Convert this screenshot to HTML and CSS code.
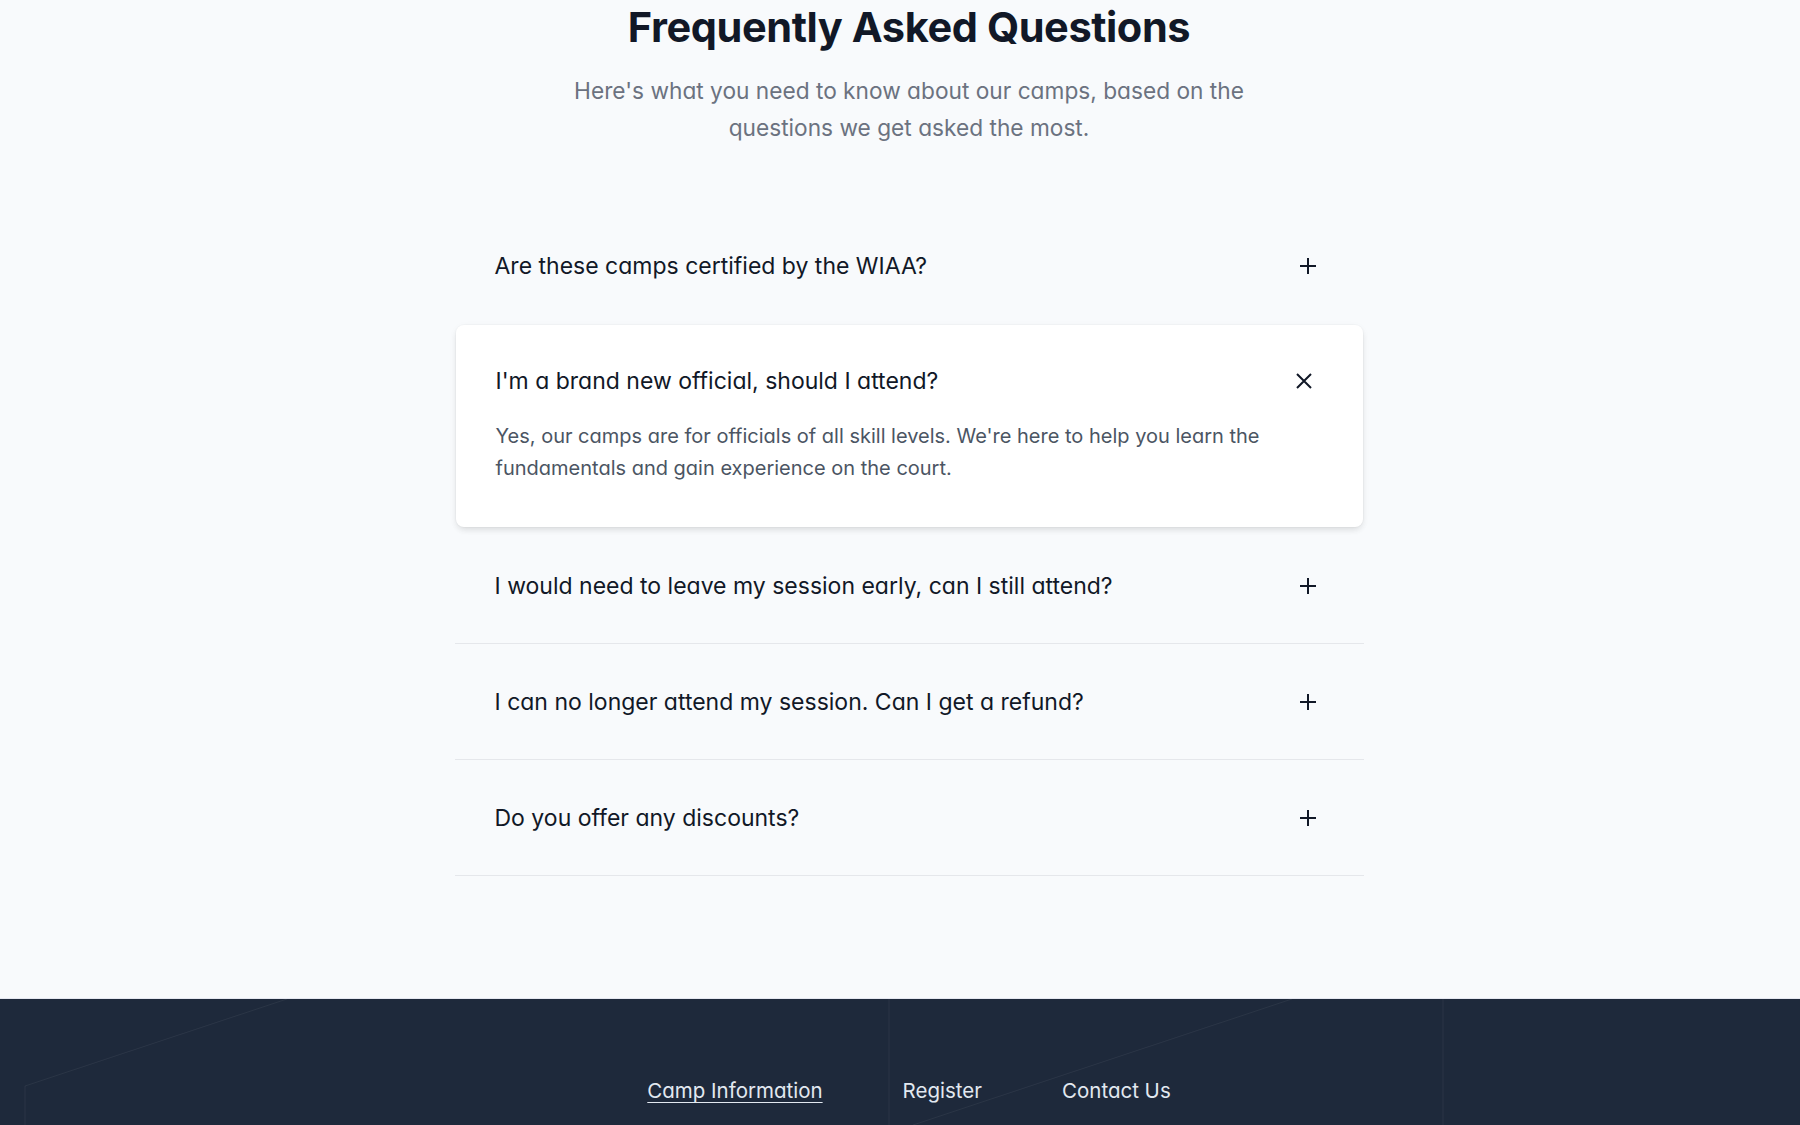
FILE: index.html
```html
<!DOCTYPE html>
<html lang="en">
<head>
<meta charset="utf-8">
<title>Frequently Asked Questions</title>
<link rel="stylesheet" href="styles.css">
</head>
<body>
<main class="page">
  <section class="faq">
    <h1 class="faq-title">Frequently Asked Questions</h1>
    <p class="faq-lead">Here's what you need to know about our camps, based on the questions we get asked the most.</p>
    <div class="faq-list">
      <div class="faq-item first">
        <span class="faq-q">Are these camps certified by the WIAA?</span>
        <svg class="icon" viewBox="0 0 16 16"><path d="M8 0v16M0 8h16"/></svg>
      </div>
      <div class="faq-card">
        <div class="faq-card-head">
          <span class="faq-q">I'm a brand new official, should I attend?</span>
          <svg class="icon icon-x" viewBox="0 0 16 16"><path d="M1 1l14 14M15 1L1 15"/></svg>
        </div>
        <p class="faq-a">Yes, our camps are for officials of all skill levels. We're here to help you learn the fundamentals and gain experience on the court.</p>
      </div>
      <div class="faq-item">
        <span class="faq-q">I would need to leave my session early, can I still attend?</span>
        <svg class="icon" viewBox="0 0 16 16"><path d="M8 0v16M0 8h16"/></svg>
      </div>
      <div class="faq-item">
        <span class="faq-q">I can no longer attend my session. Can I get a refund?</span>
        <svg class="icon" viewBox="0 0 16 16"><path d="M8 0v16M0 8h16"/></svg>
      </div>
      <div class="faq-item">
        <span class="faq-q">Do you offer any discounts?</span>
        <svg class="icon" viewBox="0 0 16 16"><path d="M8 0v16M0 8h16"/></svg>
      </div>
    </div>
  </section>
</main>
<footer class="footer">
  <svg class="footer-lines" viewBox="0 0 1800 126" preserveAspectRatio="none">
    <path d="M25 87V126M25 87L287 0M889 0V126M913 126L1292 0M1443 0V126"/>
  </svg>
  <nav class="footer-nav">
    <a class="footer-link active" href="#">Camp Information</a>
    <a class="footer-link" href="#">Register</a>
    <a class="footer-link" href="#">Contact Us</a>
  </nav>
</footer>
</body>
</html>
```

FILE: styles.css
```css
html, body {
  margin: 0;
  padding: 0;
}
body {
  background: #f8fafc;
  font-family: Inter, "Noto Sans", "Liberation Sans", sans-serif;
  font-feature-settings: "cv11" 1;
  color: #111827;
}
.page {
  padding-left: 18px;
}
.faq {
  display: flex;
  flex-direction: column;
  align-items: center;
  padding-bottom: 122px;
}
.faq-title {
  margin: 0;
  padding-top: 2px;
  font-size: 41.5px;
  line-height: 50px;
  font-weight: 700;
  letter-spacing: -0.01em;
  color: #111827;
  text-align: center;
}
.faq-lead {
  margin: 20px 0 0;
  max-width: 690px;
  font-size: 22.7px;
  line-height: 37px;
  color: #6b7280;
  text-align: center;
}
.faq-list {
  width: 909px;
  margin-top: 62px;
}
.faq-item {
  display: flex;
  align-items: center;
  justify-content: space-between;
  padding: 44px 48px 43px 40px;
  border-bottom: 1px solid #e5e7eb;
}
.faq-item.first {
  border-bottom-color: transparent;
  margin-bottom: 1px;
}
.faq-q {
  font-size: 23px;
  line-height: 28px;
  font-weight: 400;
  color: #111827;
}
.icon {
  width: 16px;
  height: 16px;
  fill: none;
  stroke: #111827;
  stroke-width: 2;
  flex: none;
}
.icon-x {
  width: 16px;
  height: 16px;
  stroke-width: 2;
  margin-right: 3px;
}
.faq-card {
  background: #ffffff;
  border-radius: 8px;
  padding: 42px 48px 43px 40px;
  margin: 0 1px 1px 1px;
  box-shadow: 0 4px 6px -1px rgba(0, 0, 0, 0.08), 0 2px 10px -2px rgba(0, 0, 0, 0.08), 0 0 0 1px rgba(0, 0, 0, 0.02);
}
.faq-card-head {
  display: flex;
  align-items: center;
  justify-content: space-between;
}
.faq-a {
  margin: 25px 0 0;
  max-width: 800px;
  font-size: 20px;
  line-height: 32px;
  color: #4b5563;
}
.footer {
  position: relative;
  background: #1e293b;
  border-top: 1px solid #e5e7f0;
  height: 126px;
  overflow: hidden;
}
.footer-lines {
  position: absolute;
  inset: 0;
  width: 100%;
  height: 100%;
  fill: none;
  stroke: rgba(255, 255, 255, 0.06);
  stroke-width: 1;
  pointer-events: none;
}
.footer-nav {
  position: relative;
  display: flex;
  justify-content: center;
  gap: 80px;
  padding: 78px 0 0 18px;
}
.footer-link {
  font-size: 20.5px;
  line-height: 28px;
  color: #e2e8f0;
  text-decoration: none;
}
.footer-link.active {
  text-decoration: underline;
  text-underline-offset: 4px;
  text-decoration-thickness: 1px;
}
```
